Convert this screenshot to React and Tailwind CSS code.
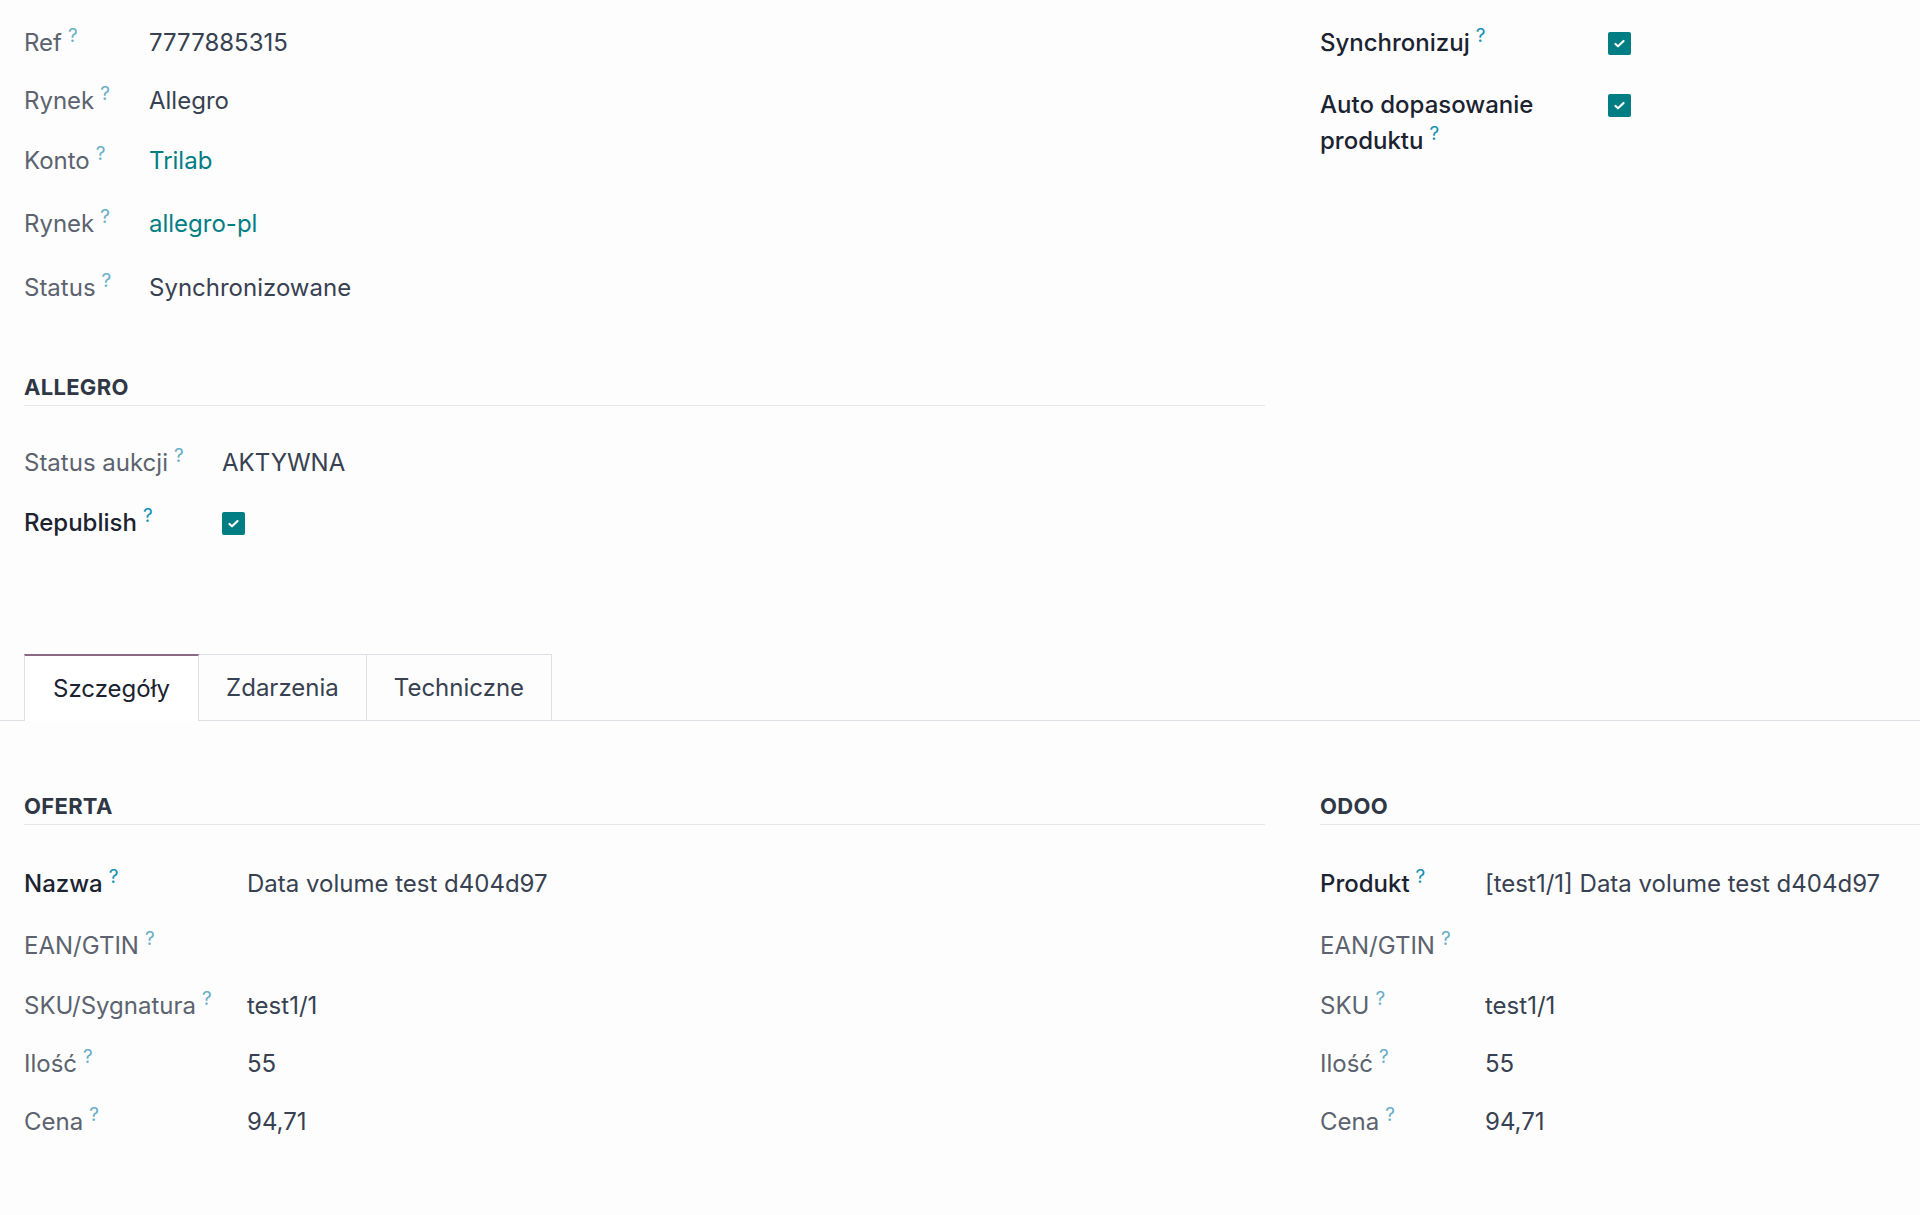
import React from 'react';

const Help = ({ muted }) => (
  <sup className={`ml-[6px] inline-block text-[19px] font-normal leading-none top-[-9px] ${muted ? 'text-[#6aaec7]' : 'text-[#1590b3]'}`}>?</sup>
);

const Label = ({ children, strong }) => (
  <span className={strong ? 'text-[#1b2230] font-medium' : 'text-[#5c636f]'}>
    {children}
    <Help muted={!strong} />
  </span>
);

const Checkbox = () => (
  <span className="inline-flex h-[23px] w-[23px] items-center justify-center rounded-[2px] bg-[#017e84]">
    <svg width="13" height="13" viewBox="0 0 16 16" fill="none">
      <path d="M3 8.5l3.2 3L13 4.8" stroke="white" strokeWidth="2.6" strokeLinecap="round" strokeLinejoin="round" />
    </svg>
  </span>
);

const Row = ({ label, strong, value, link, labelWidth, height }) => (
  <div className={`flex items-center ${height}`}>
    <div className={`${labelWidth} shrink-0`}>
      <Label strong={strong}>{label}</Label>
    </div>
    <div className={link ? 'text-[#017e84]' : 'text-[#374151]'}>{value}</div>
  </div>
);

const Heading = ({ children }) => (
  <div className="h-[34px] border-b border-[#e4e6e9] text-[22px] font-bold leading-[30px] tracking-[0.3px] text-[#2f3744]">
    {children}
  </div>
);

const topRows = [
  { label: 'Ref', value: '7777885315', h: 'h-[58px]' },
  { label: 'Rynek', value: 'Allegro', h: 'h-[58px]' },
  { label: 'Konto', value: 'Trilab', link: true, h: 'h-[62px]' },
  { label: 'Rynek', value: 'allegro-pl', link: true, h: 'h-[64px]' },
  { label: 'Status', value: 'Synchronizowane', h: 'h-[64px]' },
];

const ofertaRows = [
  { label: 'Nazwa', strong: true, value: 'Data volume test d404d97', h: 'h-[62px]' },
  { label: 'EAN/GTIN', value: '', h: 'h-[62px]' },
  { label: 'SKU/Sygnatura', value: 'test1/1', h: 'h-[58px]' },
  { label: 'Ilość', value: '55', h: 'h-[58px]' },
  { label: 'Cena', value: '94,71', h: 'h-[58px]' },
];

const odooRows = [
  { label: 'Produkt', strong: true, value: '[test1/1] Data volume test d404d97', h: 'h-[62px]' },
  { label: 'EAN/GTIN', value: '', h: 'h-[62px]' },
  { label: 'SKU', value: 'test1/1', h: 'h-[58px]' },
  { label: 'Ilość', value: '55', h: 'h-[58px]' },
  { label: 'Cena', value: '94,71', h: 'h-[58px]' },
];

const tabs = ['Szczegóły', 'Zdarzenia', 'Techniczne'];

export default function App() {
  return (
    <div className="min-h-[1215px] w-[1920px] overflow-hidden bg-[#fdfdfd] font-['Inter',sans-serif] text-[24px]">
      {/* top group */}
      <div className="flex pl-[24px] pt-[14px]">
        <div className="w-[1241px] shrink-0">
          {topRows.map((r, i) => (
            <Row key={i} label={r.label} value={r.value} link={r.link} labelWidth="w-[125px]" height={r.h} />
          ))}

          <div className="mt-[52px]">
            <Heading>ALLEGRO</Heading>
          </div>
          <div className="mt-[27px]">
            <Row label="Status aukcji" value="AKTYWNA" labelWidth="w-[198px]" height="h-[60px]" />
            <div className="flex h-[60px] items-center">
              <div className="w-[198px] shrink-0">
                <Label strong>Republish</Label>
              </div>
              <Checkbox />
            </div>
          </div>
        </div>

        <div className="ml-[55px] flex-1">
          <div className="flex h-[58px] items-center">
            <div className="w-[288px] shrink-0">
              <Label strong>Synchronizuj</Label>
            </div>
            <Checkbox />
          </div>
          <div className="mt-[15px] flex items-start">
            <div className="w-[288px] shrink-0 pr-[50px] leading-[36px]">
              <Label strong>Auto dopasowanie produktu</Label>
            </div>
            <div className="flex h-[36px] items-center">
              <Checkbox />
            </div>
          </div>
        </div>
      </div>

      {/* tabs */}
      <div className="mt-[101px] flex h-[67px] border-b border-[#dcdfe3] pl-[24px]">
        {tabs.map((t, i) => (
          <div
            key={t}
            className={
              i === 0
                ? 'mb-[-1px] flex h-[67px] items-center border-x border-t-2 border-x-[#dcdfe3] border-t-[#8a6a84] bg-white px-[28px] text-[#1b2230]'
                : 'flex h-[66px] items-center border-r border-t border-[#dcdfe3] px-[27px] text-[#374151]'
            }
          >
            {t}
          </div>
        ))}
      </div>

      {/* details */}
      <div className="mt-[70px] flex pl-[24px]">
        <div className="w-[1241px] shrink-0">
          <Heading>OFERTA</Heading>
          <div className="mt-[28px]">
            {ofertaRows.map((r, i) => (
              <Row key={i} label={r.label} strong={r.strong} value={r.value} labelWidth="w-[223px]" height={r.h} />
            ))}
          </div>
        </div>
        <div className="ml-[55px] flex-1">
          <Heading>ODOO</Heading>
          <div className="mt-[28px]">
            {odooRows.map((r, i) => (
              <Row key={i} label={r.label} strong={r.strong} value={r.value} labelWidth="w-[165px]" height={r.h} />
            ))}
          </div>
        </div>
      </div>
    </div>
  );
}
